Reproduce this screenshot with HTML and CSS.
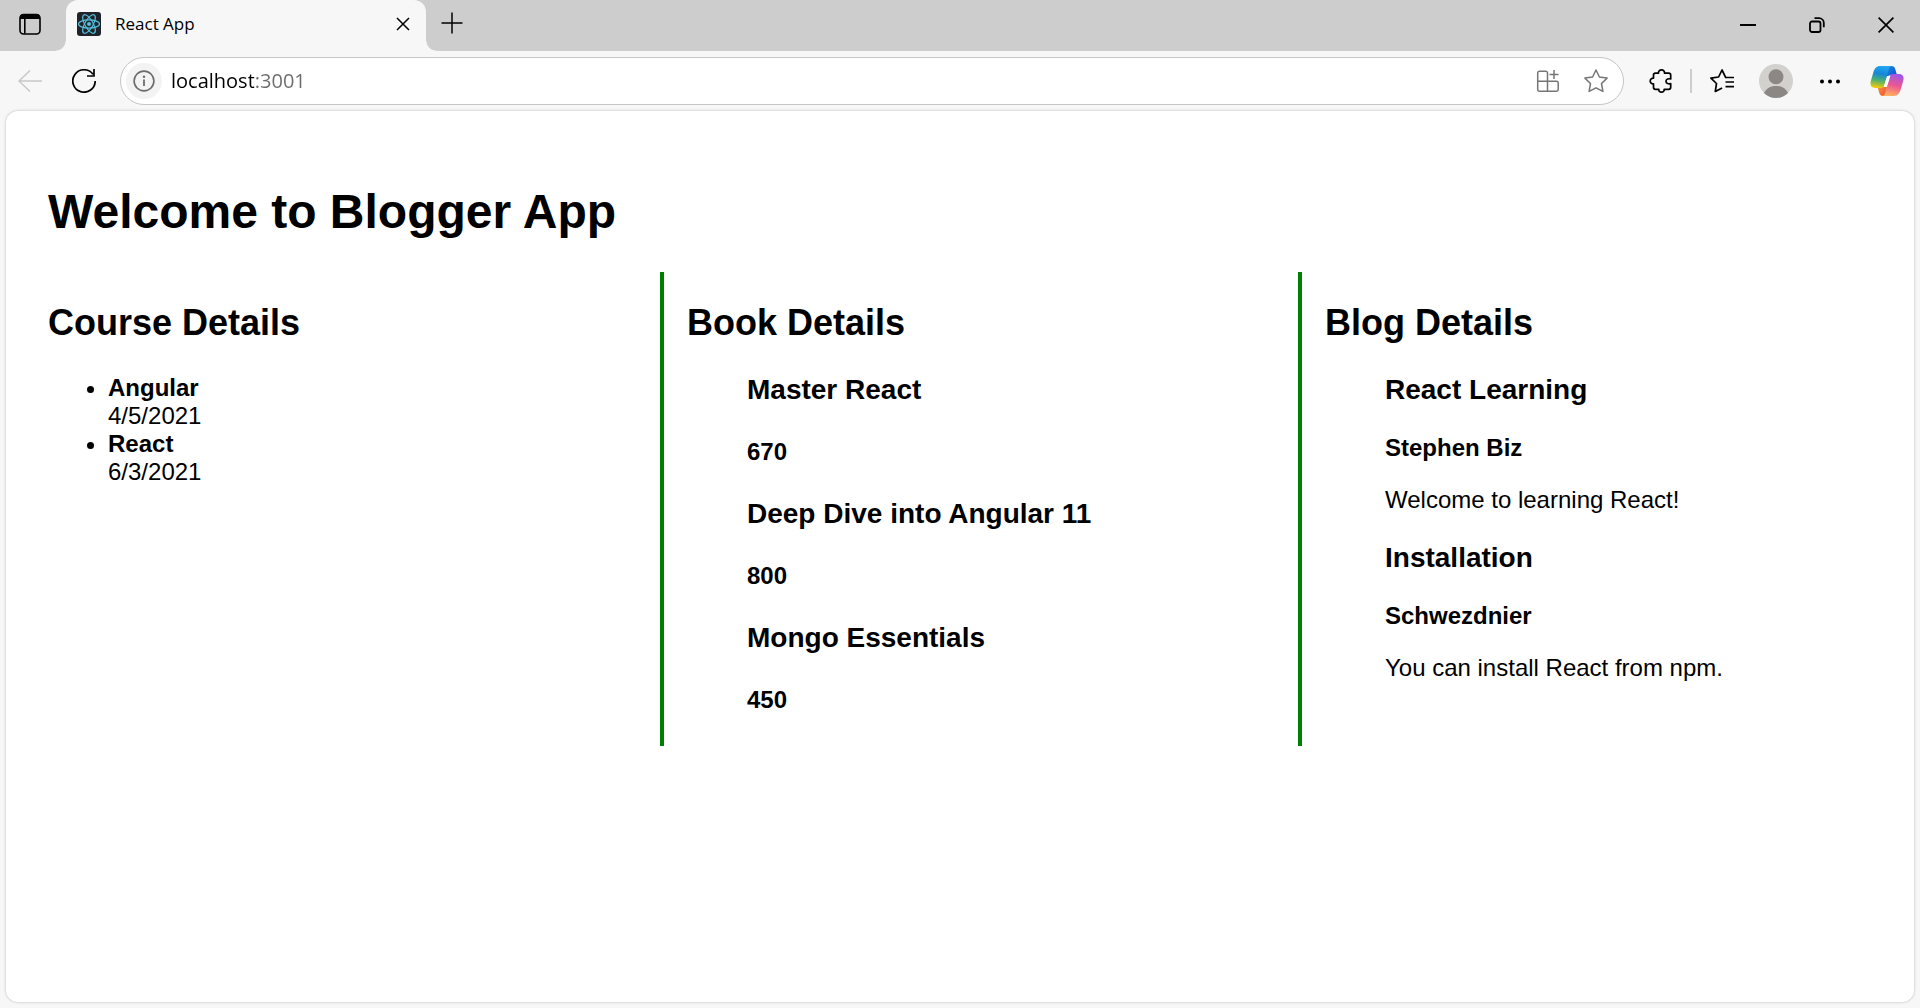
FILE: index.html
```html
<!DOCTYPE html>
<html lang="en">
<head>
<meta charset="utf-8">
<meta name="viewport" content="width=device-width, initial-scale=1">
<title>React App</title>
<link rel="stylesheet" href="styles.css">
</head>
<body>
<div class="browser">
  <header class="tab-strip">
    <button class="tab-actions" aria-label="Tab actions">
      <svg width="24" height="24" viewBox="0 0 24 24" fill="none"><rect x="2" y="2.500" width="20" height="19.500" rx="3.500" stroke="#000" stroke-width="1.600"/><path d="M2 7V5.500a3.500 3.500 0 0 1 3.500-3.500h13A3.500 3.500 0 0 1 22 5.500V7z" fill="#000"/><path d="M6.800 7v14.500" stroke="#000" stroke-width="1.600"/></svg>
    </button>
    <div class="tab">
      <svg class="favicon" width="24" height="24" viewBox="0 0 24 24" fill="none"><rect width="24" height="24" rx="3" fill="#20232a"/><g stroke="#53c1de" stroke-width="1.200"><ellipse cx="12" cy="12" rx="10.500" ry="4.100"/><ellipse cx="12" cy="12" rx="10.500" ry="4.100" transform="rotate(60 12 12)"/><ellipse cx="12" cy="12" rx="10.500" ry="4.100" transform="rotate(120 12 12)"/></g><circle cx="12" cy="12" r="2" fill="#53c1de"/></svg>
      <span class="tab-title">React App</span>
      <button class="tab-close" aria-label="Close tab">
        <svg width="14" height="14" viewBox="0 0 14 14" fill="none" stroke="#000" stroke-width="1.500"><path d="M1 1l12 12M13 1L1 13"/></svg>
      </button>
    </div>
    <button class="new-tab" aria-label="New tab">
      <svg width="22" height="22" viewBox="0 0 22 22" fill="none" stroke="#000" stroke-width="1.500"><path d="M11 .5v21M.5 11h21"/></svg>
    </button>
    <div class="window-controls">
      <button aria-label="Minimize"><svg width="16" height="16" viewBox="0 0 16 16"><path d="M0 7h16v2H0z"/></svg></button>
      <button aria-label="Restore"><svg width="16" height="16" viewBox="0 0 16 16" fill="none" stroke="#000" stroke-width="1.800"><rect x="1" y="4.500" width="10.500" height="10.500" rx="2"/><path d="M5.500 1.200H10A4.800 4.800 0 0 1 14.800 6v4.200"/></svg></button>
      <button aria-label="Close"><svg width="16" height="16" viewBox="0 0 16 16" fill="none" stroke="#000" stroke-width="1.700"><path d="M.6.6l14.800 14.800M15.400.6L.6 15.400"/></svg></button>
    </div>
  </header>

  <nav class="toolbar" aria-label="Browser toolbar">
    <button class="tool" aria-label="Back" disabled>
      <svg width="24" height="24" viewBox="0 0 24 24" fill="none" stroke="#c8c8c8" stroke-width="1.500"><path d="M12 1.500L1 12l11 10.500M1 12h23"/></svg>
    </button>
    <button class="tool" aria-label="Refresh">
      <svg width="24" height="24" viewBox="0 0 24 24" fill="none" stroke="#000" stroke-width="1.700"><path d="M23.200 12A11.200 11.200 0 1 1 21 5.300M22 0v7h-7"/></svg>
    </button>
    <form class="address-bar">
      <button class="site-info" type="button" aria-label="Site information">
        <svg width="22" height="22" viewBox="0 0 22 22" fill="none"><circle cx="11" cy="11" r="9.900" stroke="#6b6b6b" stroke-width="1.600"/><path d="M11 9.500V16" stroke="#6b6b6b" stroke-width="1.800"/><circle cx="11" cy="6.800" r="1.200" fill="#6b6b6b"/></svg>
      </button>
      <input class="url" type="text" value="localhost:3001" aria-label="Address" spellcheck="false">
      <button class="tool" type="button" aria-label="App available">
        <svg width="24" height="24" viewBox="0 0 24 24" fill="none" stroke="#767676" stroke-width="1.500"><path d="M11.500 22.200H3.400a1.700 1.700 0 0 1-1.700-1.700V4a1.700 1.700 0 0 1 1.700-1.700h6.400A1.700 1.700 0 0 1 11.500 4v18.200h9a1.700 1.700 0 0 0 1.700-1.700v-6.600a1.700 1.700 0 0 0-1.700-1.700H1.700M18 1v9M13.500 5.500h9"/></svg>
      </button>
      <button class="tool" type="button" aria-label="Add to favorites">
        <svg width="24" height="24" viewBox="0 0 24 24" fill="none" stroke="#767676" stroke-width="1.500" stroke-linejoin="round"><path d="M12 1l3.400 7 7.700 1.100-5.600 5.400 1.400 7.900L12 18.800l-6.900 3.600 1.400-7.900L.9 9.100 8.600 8z"/></svg>
      </button>
    </form>
    <button class="tool" aria-label="Extensions">
      <svg width="24" height="24" viewBox="-1 0 24 24" fill="none" stroke="#000" stroke-width="1.700" stroke-linejoin="round"><path d="M9.500 4.200C9.200 2.300 10.600.9 12.500.9s3.300 1.400 3 3.300h4.200a2 2 0 0 1 2 2v3.700c-2-.4-4.700 0-4.700 2.400s2.700 2.800 4.700 2.400v3.600a2 2 0 0 1-2 2h-4.500c.2 1.700-1 2.800-2.700 2.800s-3-1.100-2.700-2.800H6.500a2 2 0 0 1-2-2v-3.400C2.600 15 1.200 13.800 1.200 12s1.400-3 3.300-2.800v-3a2 2 0 0 1 2-2z"/></svg>
    </button>
    <span class="divider"></span>
    <button class="tool" aria-label="Favorites">
      <svg width="24" height="24" viewBox="0 0 24 24" fill="none" stroke="#000" stroke-width="1.700" stroke-linejoin="round"><path d="M24 8.500h-8.300L12 1 8.600 8 .9 9.100l5.600 5.400-1.200 7.900 6.800-3.500M15.500 13H24M15.500 17.700H24"/></svg>
    </button>
    <button class="tool" aria-label="Profile">
      <svg width="34" height="34" viewBox="0 0 34 34"><defs><clipPath id="avatar"><circle cx="17" cy="17" r="17"/></clipPath></defs><g clip-path="url(#avatar)"><path fill="#d3d1ce" d="M0 0h34v34H0z"/><circle cx="17" cy="12.800" r="7.500" fill="#8c8785"/><path d="M4.500 30C7 24.500 11 22 17 22s10 2.500 12.500 8L27 34H7z" fill="#8c8785"/></g></svg>
    </button>
    <button class="tool" aria-label="Settings and more">
      <svg width="24" height="24" viewBox="0 0 24 24"><circle cx="4" cy="12.500" r="2"/><circle cx="12" cy="12.500" r="2"/><circle cx="20" cy="12.500" r="2"/></svg>
    </button>
    <button class="tool copilot" aria-label="Copilot">
      <svg width="34" height="32" viewBox="0 0 34 32">
        <defs>
          <linearGradient id="cpBlue" x1="0" y1="0" x2="1" y2="1"><stop offset="0" stop-color="#1b8be8"/><stop offset="1" stop-color="#1744c4"/></linearGradient>
          <linearGradient id="cpLeft" x1=".5" y1="0" x2=".35" y2="1"><stop offset="0" stop-color="#22a7f0"/><stop offset=".35" stop-color="#1687d8"/><stop offset=".65" stop-color="#4bb071"/><stop offset="1" stop-color="#f7cb08"/></linearGradient>
          <linearGradient id="cpRight" x1=".65" y1="0" x2=".4" y2="1"><stop offset="0" stop-color="#9c56ea"/><stop offset=".5" stop-color="#eb5693"/><stop offset="1" stop-color="#ffb05b"/></linearGradient>
          <linearGradient id="cpRed" x1="0" y1="0" x2="1" y2="1"><stop offset="0" stop-color="#f7a02d"/><stop offset="1" stop-color="#ec4b43"/></linearGradient>
        </defs>
        <path d="M17 1h4.500c2 0 3 1 3.600 2.800L27 10h-5.500c-3 0-4 1.500-5 4z" fill="url(#cpBlue)"/>
        <path d="M17 31h-4c-2 0-3-1-3.600-2.800L7.500 22H13c3 0 4-1.500 5-4z" fill="url(#cpRed)"/>
        <path d="M22 1H10C6.500 1 4.600 3.500 3.400 7.200L.8 16C-.3 20.200 1 23 5 23h6c2 0 3-1 3.600-3L18.700 4.500C19.300 2.300 20.300 1 22 1z" fill="url(#cpLeft)"/>
        <path d="M12 31h12c3.500 0 5.400-2.500 6.600-6.200l2.600-8.800C34.300 11.800 33 9 29 9h-6c-2 0-3 1-3.600 3l-4.100 15.500C14.700 29.700 13.700 31 12 31z" fill="url(#cpRight)"/>
        <path d="M17.200 11h3.200l-3.600 11h-3.200z" fill="#fff"/>
      </svg>
    </button>
  </nav>

  <main class="page">
    <h1>Welcome to Blogger App</h1>
    <div class="columns">
      <section class="column">
        <h2>Course Details</h2>
        <ul class="entries">
          <li><strong>Angular</strong><br>4/5/2021</li>
          <li><strong>React</strong><br>6/3/2021</li>
        </ul>
      </section>
      <section class="column">
        <h2>Book Details</h2>
        <div class="entries">
          <h3>Master React</h3>
          <h4>670</h4>
          <h3>Deep Dive into Angular 11</h3>
          <h4>800</h4>
          <h3>Mongo Essentials</h3>
          <h4>450</h4>
        </div>
      </section>
      <section class="column">
        <h2>Blog Details</h2>
        <div class="entries">
          <h3>React Learning</h3>
          <p><strong>Stephen Biz</strong></p>
          <p>Welcome to learning React!</p>
          <h3>Installation</h3>
          <p><strong>Schwezdnier</strong></p>
          <p>You can install React from npm.</p>
        </div>
      </section>
    </div>
  </main>
</div>
</body>
</html>
```
FILE: styles.css
```css
* {
  box-sizing: border-box;
}

body {
  margin: 0;
  background: #f7f7f7;
  color: #000;
}

button {
  display: flex;
  align-items: center;
  justify-content: center;
  padding: 0;
  border: 0;
  background: none;
}

svg {
  flex: none;
}

.browser {
  display: flex;
  flex-direction: column;
  min-height: 100vh;
  font-family: "Open Sans", "Noto Sans", sans-serif;
}

/* Tab strip */
.tab-strip {
  display: flex;
  height: 51px;
  background: #cdcdcd;
}

.tab-actions {
  width: 60px;
  height: 48px;
  margin-right: 6px;
}

.tab {
  position: relative;
  display: flex;
  align-items: center;
  gap: 14px;
  width: 360px;
  padding: 0 10px 3px 11px;
  border-radius: 12px 12px 0 0;
  background: #f7f7f7;
}

/* Outward curves at the foot of the active tab */
.tab::before,
.tab::after {
  content: "";
  position: absolute;
  bottom: 0;
  width: 10px;
  height: 10px;
}

.tab::before {
  right: 100%;
  background: radial-gradient(circle at 0 0, #cdcdcd 9px, #f7f7f7 10px);
}

.tab::after {
  left: 100%;
  background: radial-gradient(circle at 100% 0, #cdcdcd 9px, #f7f7f7 10px);
}

.tab-title {
  flex: 1;
  font-size: 17px;
  line-height: 24px;
}

.tab-close {
  width: 26px;
  height: 26px;
}

.new-tab {
  width: 52px;
  height: 46px;
}

.window-controls {
  display: flex;
  height: 50px;
  margin-left: auto;
}

.window-controls button {
  width: 69px;
}

/* Toolbar */
.toolbar {
  display: flex;
  align-items: center;
  gap: 6px;
  height: 60px;
  padding: 0 6px;
}

.tool {
  width: 48px;
  height: 48px;
}

.copilot {
  width: 54px;
}

.divider {
  width: 2px;
  height: 24px;
  background: #cdcdcd;
}

.address-bar {
  display: flex;
  flex: 1;
  align-items: center;
  height: 48px;
  margin: 0 6px;
  padding: 0 3px 0 5px;
  border: 1px solid #c6c6c6;
  border-radius: 24px;
  background: #fff;
}

.site-info {
  width: 36px;
  height: 36px;
  margin-right: 9px;
  border-radius: 50%;
  background: #f3f3f3;
}

/* The host is black and the port grey */
.url {
  flex: 1;
  min-width: 0;
  padding: 0;
  border: 0;
  outline: 0;
  background: linear-gradient(90deg, #000 83px, #6b6b6b 83px);
  background-clip: text;
  color: transparent;
  caret-color: #000;
  font: 20px/30px "Open Sans", "Noto Sans", sans-serif;
}

/* Web page */
.page {
  flex: 1;
  margin: 0 6px 6px;
  padding: 75px 12px 24px 42px;
  border-radius: 12px;
  background: #fff;
  box-shadow: 0 0 3px rgba(0, 0, 0, 0.25);
  font: 24px/28px "Liberation Sans", Arial, sans-serif;
}

h1 {
  margin: 0 0 34px;
  font-size: 48px;
  line-height: 52px;
}

h2 {
  margin: 30px 0;
  font-size: 36px;
  line-height: 42px;
}

h3 {
  margin: 28px 0;
  font-size: 28px;
  line-height: 32px;
}

h4 {
  margin: 32px 0;
  font-size: 24px;
}

p {
  margin: 24px 0;
}

.columns {
  display: grid;
  grid-template-columns: 612fr 638fr 604fr;
}

.column {
  display: flow-root;
}

.column + .column {
  padding-left: 23px;
  border-left: 4px solid green;
}

.entries {
  margin: 0;
  padding-left: 60px;
}
```
